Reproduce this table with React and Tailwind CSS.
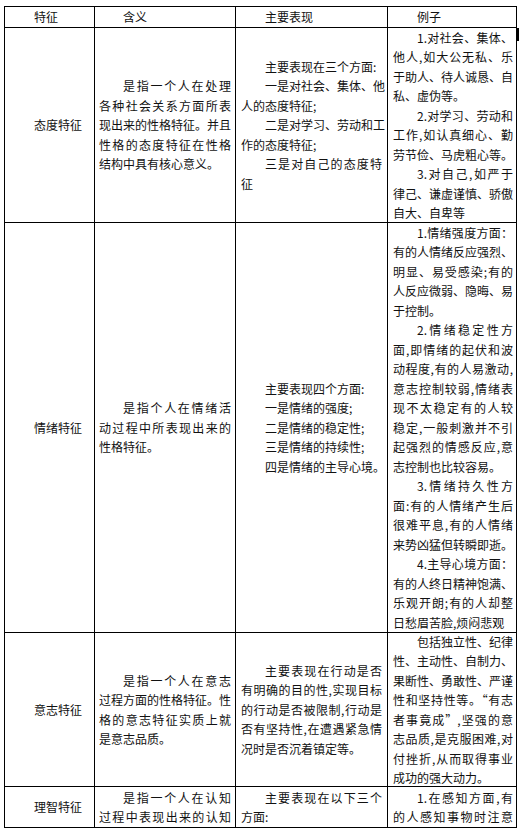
import React from "react";

// one paragraph = array of lines; first line indented, all but the last justified
// `open` means the paragraph goes on past the cell, so its last line is justified too
const rows = [
  {
    h: "header",
    cells: [
      [["特征"]],
      [["含义"]],
      [["主要表现"]],
      [["例子"]],
    ],
  },
  {
    cells: [
      [["态度特征"]],
      [["是指一个人在处理", "各种社会关系方面所表", "现出来的性格特征。并且", "性格的态度特征在性格", "结构中具有核心意义。"]],
      [
        ["主要表现在三个方面:"],
        ["一是对社会、集体、他", "人的态度特征;"],
        ["二是对学习、劳动和工", "作的态度特征;"],
        ["三是对自己的态度特", "征"],
      ],
      [
        ["1.对社会、集体、", "他人,如大公无私、乐", "于助人、待人诚恳、自", "私、虚伪等。"],
        ["2.对学习、劳动和", "工作,如认真细心、勤", "劳节俭、马虎粗心等。"],
        ["3.对自己,如严于", "律己、谦虚谨慎、骄傲", "自大、自卑等"],
      ],
    ],
  },
  {
    cells: [
      [["情绪特征"]],
      [["是指个人在情绪活", "动过程中所表现出来的", "性格特征。"]],
      [
        ["主要表现四个方面:"],
        ["一是情绪的强度;"],
        ["二是情绪的稳定性;"],
        ["三是情绪的持续性;"],
        ["四是情绪的主导心境。"],
      ],
      [
        ["1.情绪强度方面：", "有的人情绪反应强烈、", "明显、易受感染;有的", "人反应微弱、隐晦、易", "于控制。"],
        ["2.情绪稳定性方", "面,即情绪的起伏和波", "动程度,有的人易激动,", "意志控制较弱,情绪表", "现不太稳定有的人较", "稳定,一般刺激并不引", "起强烈的情感反应,意", "志控制也比较容易。"],
        ["3.情绪持久性方", "面:有的人情绪产生后", "很难平息,有的人情绪", "来势凶猛但转瞬即逝。"],
        ["4.主导心境方面：", "有的人终日精神饱满、", "乐观开朗;有的人却整", "日愁眉苦脸,烦闷悲观"],
      ],
    ],
  },
  {
    cells: [
      [["意志特征"]],
      [["是指一个人在意志", "过程方面的性格特征。性", "格的意志特征实质上就", "是意志品质。"]],
      [["主要表现在行动是否", "有明确的目的性,实现目标", "的行动是否被限制,行动是", "否有坚持性,在遭遇紧急情", "况时是否沉着镇定等。"]],
      [["包括独立性、纪律", "性、主动性、自制力、", "果断性、勇敢性、严谨", "性和坚持性等。“有志", "者事竟成”,坚强的意", "志品质,是克服困难,对", "付挫折,从而取得事业", "成功的强大动力。"]],
    ],
  },
  {
    cells: [
      [["理智特征"]],
      [{ open: true, lines: ["是指一个人在认知", "过程中表现出来的认知"] }],
      [["主要表现在以下三个", "方面:"]],
      [{ open: true, lines: ["1.在感知方面,有", "的人感知事物时注意"] }],
    ],
  },
];

const pad = ["px-[5px]", "px-[4px]", "px-[5px]", "pl-[5px] pr-[3px]"];

function Paragraph({ p }) {
  const lines = Array.isArray(p) ? p : p.lines;
  const open = !Array.isArray(p) && p.open;
  return lines.map((line, i) => {
    const last = i === lines.length - 1 && !open;
    return (
      <div
        key={i}
        className={`whitespace-nowrap ${i === 0 ? "indent-[24px]" : ""} ${
          last ? "text-left" : "text-justify [text-align-last:justify]"
        }`}
      >
        {line}
      </div>
    );
  });
}

export default function App() {
  return (
    <div
      lang="zh-CN"
      className="min-h-screen bg-white pl-[4px] pt-[6px] font-['Noto_Sans_CJK_SC',sans-serif] text-[12px] leading-[19.5px] text-[#111]"
    >
      <div className="relative grid w-max grid-cols-[90px_141px_152px_129px] grid-rows-[21px_195px_410px_154px_41px] border-l border-t border-black">
        {rows.map((row, r) =>
          row.cells.map((cell, c) => (
            <div
              key={`${r}-${c}`}
              className={`flex flex-col justify-center overflow-hidden border-b border-r border-black ${pad[c]}`}
            >
              {cell.map((p, k) => (
                <Paragraph key={k} p={p} />
              ))}
            </div>
          ))
        )}
        <div className="absolute left-[511px] top-[21px] h-[13px] w-[3px] bg-black" />
      </div>
    </div>
  );
}
